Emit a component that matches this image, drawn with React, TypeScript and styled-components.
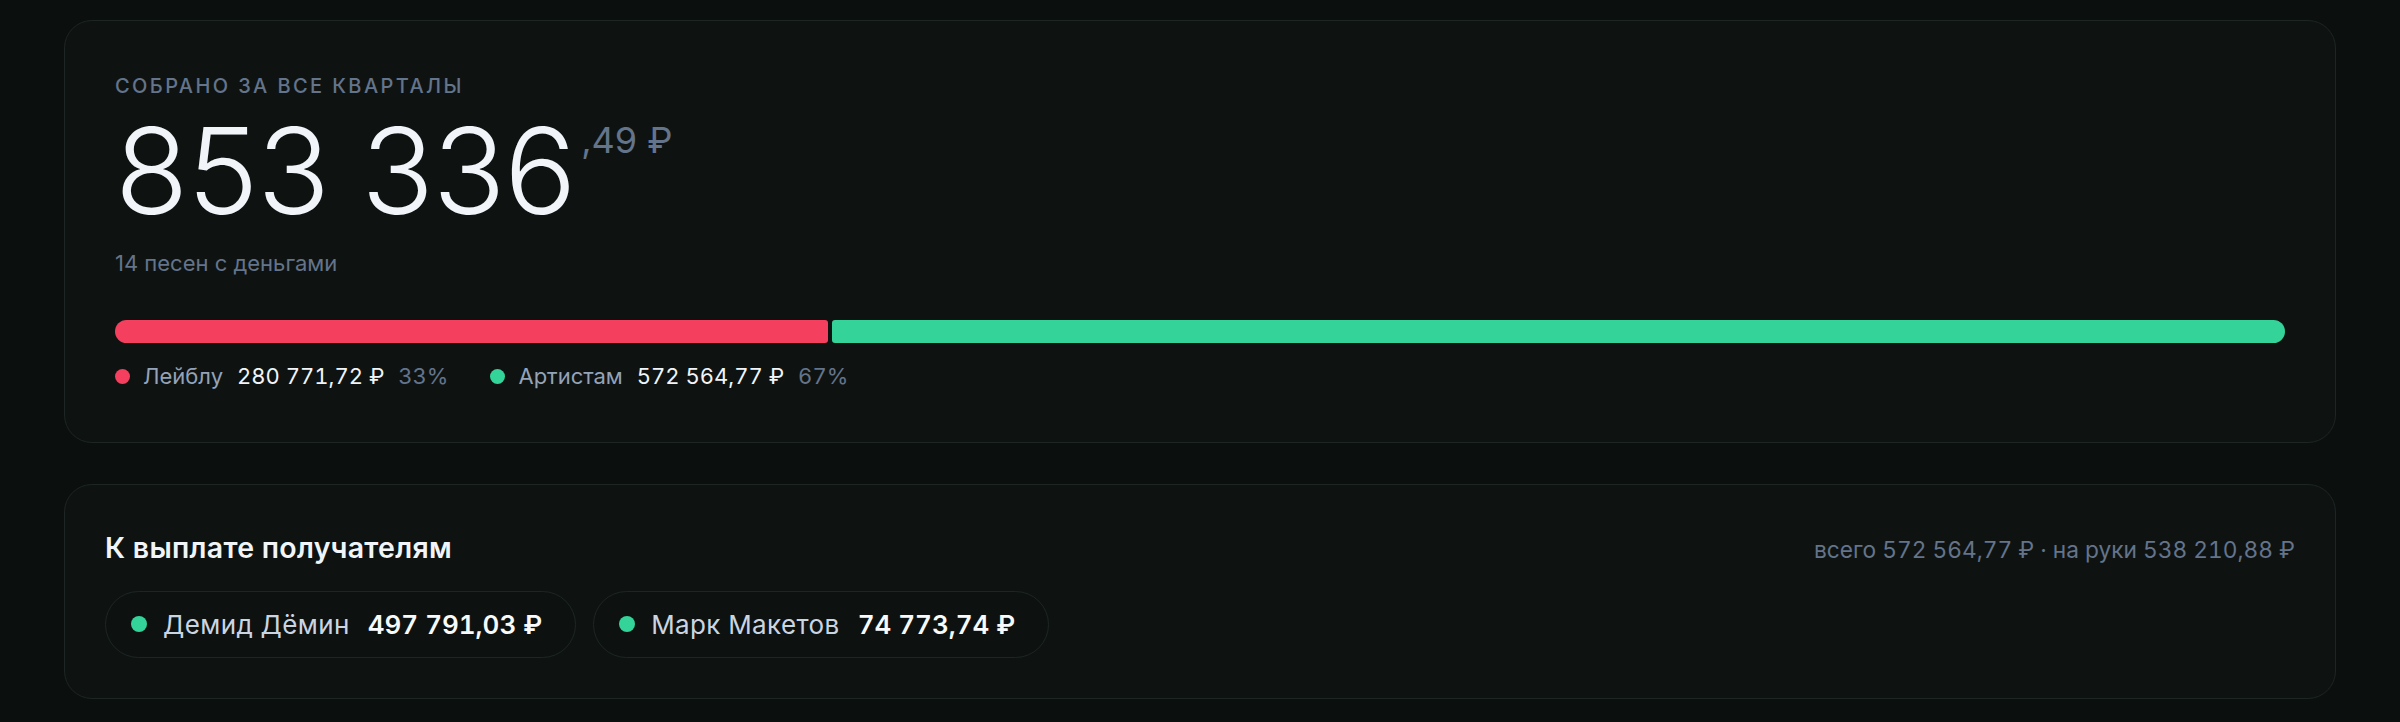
import React from "react";
import styled, { createGlobalStyle } from "styled-components";

const GlobalStyle = createGlobalStyle`
  html, body {
    margin: 0;
    padding: 0;
    background: #0b0f0e;
  }
  body {
    font-family: Inter, "Noto Sans", "Liberation Sans", sans-serif;
    color: #f1f5f9;
    -webkit-font-smoothing: antialiased;
  }
`;

const Page = styled.main`
  display: flex;
  flex-direction: column;
  gap: 41px;
  padding: 20px 64px 24px;
`;

const Card = styled.section<{ $pad: string }>`
  background: #0e1312;
  border: 1px solid #1d2624;
  border-radius: 28px;
  padding: ${(p) => p.$pad};
  display: flex;
  flex-direction: column;
`;

const Eyebrow = styled.div`
  font-size: 20px;
  line-height: 1.5;
  letter-spacing: 0.12em;
  text-transform: uppercase;
  color: #64748b;
  font-weight: 500;
`;

const TotalRow = styled.div`
  display: flex;
  align-items: flex-start;
  margin-top: 10px;
`;

const TotalMain = styled.span`
  font-size: 120px;
  line-height: 1;
  font-weight: 300;
  letter-spacing: -0.01em;
  color: #f1f5f9;
`;

const TotalCents = styled.span`
  font-size: 36px;
  line-height: 1;
  font-weight: 400;
  color: #64748b;
  margin-top: 11px;
  margin-left: 6px;
`;

const Sub = styled.div`
  margin-top: 16px;
  font-size: 22px;
  line-height: 1.5;
  color: #64748b;
`;

const Bar = styled.div`
  margin-top: 40px;
  display: flex;
  gap: 4px;
  height: 23px;
  border-radius: 999px;
  overflow: hidden;
`;

const Segment = styled.div<{ $color: string }>`
  background: ${(p) => p.$color};
  border-radius: 3px;
  height: 100%;
`;

const Legend = styled.div`
  margin-top: 18px;
  display: flex;
  align-items: center;
  gap: 42px;
  font-size: 22px;
  line-height: 1.4;
  font-variant-numeric: tabular-nums;
`;

const LegendItem = styled.div`
  display: flex;
  align-items: center;
`;

const Dot = styled.span<{ $color: string; $size: number }>`
  width: ${(p) => p.$size}px;
  height: ${(p) => p.$size}px;
  border-radius: 50%;
  background: ${(p) => p.$color};
  flex: none;
`;

const LegendLabel = styled.span`
  color: #94a3b8;
  margin-left: 13px;
`;

const LegendValue = styled.span`
  color: #f1f5f9;
  font-weight: 400;
  margin-left: 14px;
`;

const LegendPct = styled.span`
  color: #64748b;
  margin-left: 14px;
`;

const Header = styled.div`
  display: flex;
  justify-content: space-between;
  align-items: baseline;
`;

const Title = styled.h2`
  margin: 0;
  font-size: 28.5px;
  line-height: 1.4;
  font-weight: 600;
  letter-spacing: 0.01em;
  color: #f1f5f9;
`;

const Summary = styled.div`
  font-size: 22.7px;
  line-height: 1.4;
  color: #64748b;
  font-variant-numeric: tabular-nums;
`;

const Pills = styled.div`
  margin-top: 23px;
  display: flex;
  gap: 17px;
`;

const Pill = styled.div`
  display: flex;
  align-items: center;
  gap: 16px;
  padding: 14px 33px 14px 25px;
  border: 1px solid #1d2624;
  border-radius: 999px;
  background: #0d1211;
  font-size: 26px;
  line-height: 37px;
  font-variant-numeric: tabular-nums;
`;

const PillName = styled.span`
  color: #cbd5e1;
  letter-spacing: 0.015em;
`;

const PillAmount = styled.span`
  color: #f8fafc;
  font-weight: 600;
  margin-left: 2px;
`;

const LABEL = 280771.72;
const ARTISTS = 572564.77;

const recipients = [
  { name: "Демид Дёмин", amount: "497 791,03 ₽" },
  { name: "Марк Макетов", amount: "74 773,74 ₽" },
];

export default function App() {
  return (
    <>
      <GlobalStyle />
      <Page>
        <Card $pad="50px">
          <Eyebrow>Собрано за все кварталы</Eyebrow>
          <TotalRow>
            <TotalMain>853 336</TotalMain>
            <TotalCents>,49 ₽</TotalCents>
          </TotalRow>
          <Sub>14 песен с деньгами</Sub>
          <Bar>
            <Segment $color="#f43f5e" style={{ flex: LABEL }} />
            <Segment $color="#34d399" style={{ flex: ARTISTS }} />
          </Bar>
          <Legend>
            <LegendItem>
              <Dot $color="#f43f5e" $size={15} />
              <LegendLabel>Лейблу</LegendLabel>
              <LegendValue>280 771,72 ₽</LegendValue>
              <LegendPct>33%</LegendPct>
            </LegendItem>
            <LegendItem>
              <Dot $color="#34d399" $size={15} />
              <LegendLabel>Артистам</LegendLabel>
              <LegendValue>572 564,77 ₽</LegendValue>
              <LegendPct>67%</LegendPct>
            </LegendItem>
          </Legend>
        </Card>
        <Card $pad="43px 40px 40px">
          <Header>
            <Title>К выплате получателям</Title>
            <Summary>всего 572 564,77 ₽ · на руки 538 210,88 ₽</Summary>
          </Header>
          <Pills>
            {recipients.map((r) => (
              <Pill key={r.name}>
                <Dot $color="#34d399" $size={16} />
                <PillName>{r.name}</PillName>
                <PillAmount>{r.amount}</PillAmount>
              </Pill>
            ))}
          </Pills>
        </Card>
      </Page>
    </>
  );
}
